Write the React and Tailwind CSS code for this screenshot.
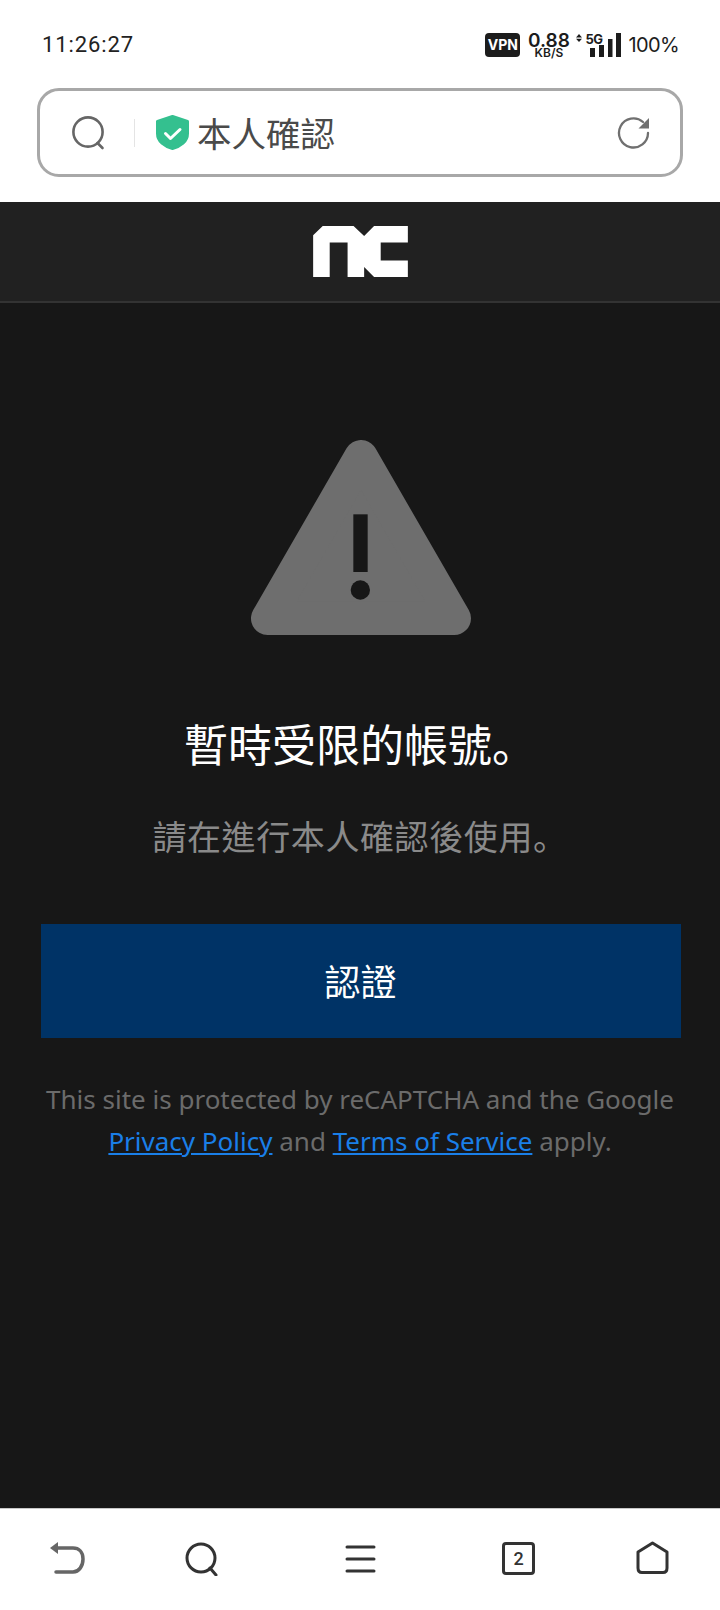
const cjk = "font-['Noto_Sans_CJK_TC',sans-serif]";
const cjkPeriod = "font-['Noto_Sans_CJK_SC',sans-serif]";

const StatusBar = () => (
  <div className="h-[88px] flex items-center justify-between pl-[42px] pr-[41px] pt-[1px]">
    <span className="font-['Roboto',sans-serif] text-[22px] tracking-[0.9px] text-[#222]">11:26:27</span>
    <div className="flex items-center font-['Inter',sans-serif] text-[#1c1c1c]">
      <div className="w-[35px] h-[24px] bg-[#1c1c1c] rounded-[4px] text-white text-[14px] font-bold flex items-center justify-center">VPN</div>
      <div className="ml-[9px] w-[39px] flex flex-col items-center">
        <span className="text-[19px] font-semibold leading-[15px]">0.88</span>
        <span className="text-[12px] font-semibold leading-[9px]">KB/S</span>
      </div>
      <div className="relative ml-[8px] w-[45px] h-[24px]">
        <svg className="absolute left-0 top-0" width="45" height="24" viewBox="0 0 45 24">
          <path d="M3 0l3 3.5H0zM3 8l3-3.3H0z" fill="#1c1c1c" transform="translate(0 1)" />
          <rect x="14" y="15" width="5" height="9" fill="#1c1c1c" />
          <rect x="23" y="12" width="5" height="12" fill="#1c1c1c" />
          <rect x="32" y="6" width="4.5" height="18" fill="#1c1c1c" />
          <rect x="40" y="0" width="5" height="24" fill="#1c1c1c" />
        </svg>
        <span className="absolute left-[9px] top-0 text-[13px] font-bold leading-[12px] tracking-[-0.5px]">5G</span>
      </div>
      <span className="ml-[7px] text-[20px] tracking-[-0.6px]">100%</span>
    </div>
  </div>
);

const AddressBar = () => (
  <div className="h-[114px] px-[37px]">
    <div className="h-[89px] border-[3px] border-[#a8a8a8] rounded-[22px] flex items-center pl-[32px] pr-[29px]">
      <svg width="34" height="34" viewBox="0 0 34 34" fill="none" stroke="#666" strokeWidth="2.6">
        <circle cx="16" cy="16" r="14.6" />
        <path d="M25.5 27l5 5" strokeLinecap="round" />
      </svg>
      <div className="ml-[28px] w-[1px] h-[28px] bg-[#e4e4e4]" />
      <svg className="ml-[21px]" width="33" height="35" viewBox="0 0 33 35">
        <path d="M16.500 1.500L31.500 6.500v12c0 8-7 13-15 15C8.500 31.500 1.500 26.500 1.500 18.500v-12z" fill="#34c08f" stroke="#34c08f" strokeWidth="3" strokeLinejoin="round" />
        <path d="M9.500 18.500l5 5 9.500-9" fill="none" stroke="#fff" strokeWidth="3" strokeLinecap="round" strokeLinejoin="round" />
      </svg>
      <span className={`${cjk} ml-[8px] text-[34.500px] leading-none text-[#4a4a4a]`}>本人確認</span>
      <svg className="ml-auto" width="34" height="34" viewBox="0 0 34 34" fill="none" stroke="#707070" strokeWidth="2.300">
        <path d="M31 17a14.500 14.500 0 1 1-5-11" strokeLinecap="round" />
        <path d="M32 2v10.500H21.500z" fill="#707070" stroke="none" />
      </svg>
    </div>
  </div>
);

const WarningIcon = () => (
  <svg className="ml-[1px]" width="220" height="195" viewBox="62 60 660 585">
    <path d="M392 110L112 595H672Z" fill="#6e6e6e" stroke="#6e6e6e" strokeWidth="100" strokeLinejoin="round" />
    <rect x="369" y="283" width="43" height="173" fill="#171717" />
    <circle cx="390" cy="510" r="29" fill="#171717" />
  </svg>
);

const BottomNav = () => (
  <div className="h-[102px] bg-white border-t border-[#c8c8c8] flex items-start pl-[49px] pt-[33px]">
    <svg width="36" height="32" viewBox="0 0 36 32" fill="none" stroke="#666" strokeWidth="3.500" strokeLinecap="round">
      <path d="M8 6h16c6 0 10 4 10 11s-4 13-10 13H7" />
      <path d="M1 6l8-6v12z" fill="#666" stroke="none" />
    </svg>
    <svg className="ml-[100px]" width="34" height="34" viewBox="0 0 34 34" fill="none" stroke="#333" strokeWidth="3">
      <circle cx="16" cy="16" r="14" />
      <path d="M25 26l6 7" strokeLinecap="round" />
    </svg>
    <svg className="ml-[126px] mt-[3px]" width="31" height="28" viewBox="0 0 31 28" fill="none" stroke="#333" strokeWidth="3" strokeLinecap="round">
      <path d="M2 2h27M2 14h27M2 26h27" />
    </svg>
    <div className="ml-[126px] w-[33px] h-[33px] border-[3px] border-[#333] rounded-[4px] flex items-center justify-center font-['Roboto',sans-serif] text-[18px] font-medium text-[#333]">2</div>
    <svg className="ml-[101px] -mt-[1px]" width="33" height="33" viewBox="0 0 33 33" fill="none" stroke="#333" strokeWidth="3" strokeLinejoin="round">
      <path d="M16.500 2L31 11v16c0 3-1.500 4.500-4 4.500H6c-2.500 0-4-1.500-4-4.500V11z" />
    </svg>
  </div>
);

export default function App() {
  return (
    <div className="w-[720px] h-[1610px] flex flex-col bg-white overflow-hidden">
      <StatusBar />
      <AddressBar />
      <header className="h-[101px] bg-[#212121] border-b-2 border-[#333] flex items-center justify-center">
        <svg width="95" height="51" viewBox="158 94 286 154" fill="#fff">
          <path d="M158 122L187 94H280L312 124L342 94H444V144H362V198H444V248H342L312 218V248H262V144H208V248H158Z" />
        </svg>
      </header>
      <main className="flex-1 bg-[#171717] flex flex-col items-center pt-[137px]">
        <WarningIcon />
        <h1 className={`${cjk} mt-[78px] text-[44px] leading-[60px] text-white`}>
          暫時受限的帳號<span className={cjkPeriod}>。</span>
        </h1>
        <p className={`${cjk} mt-[38px] text-[34px] leading-[50px] tracking-[0.6px] text-[#8a8a8a]`}>
          請在進行本人確認後使用<span className={cjkPeriod}>。</span>
        </p>
        <button className={`${cjk} mt-[63px] ml-[1px] w-[640px] h-[114px] bg-[#003366] text-white text-[36px] pb-[2px]`}>認證</button>
        <p className="mt-[40px] font-['Noto_Sans',sans-serif] text-[26px] leading-[42px] text-center text-[#6b6b6b]">
          This site is protected by reCAPTCHA and the Google
          <br />
          <a className="text-[#1a7fe8] underline">Privacy Policy</a> and <a className="text-[#1a7fe8] underline">Terms of Service</a> apply.
        </p>
      </main>
      <BottomNav />
    </div>
  );
}
